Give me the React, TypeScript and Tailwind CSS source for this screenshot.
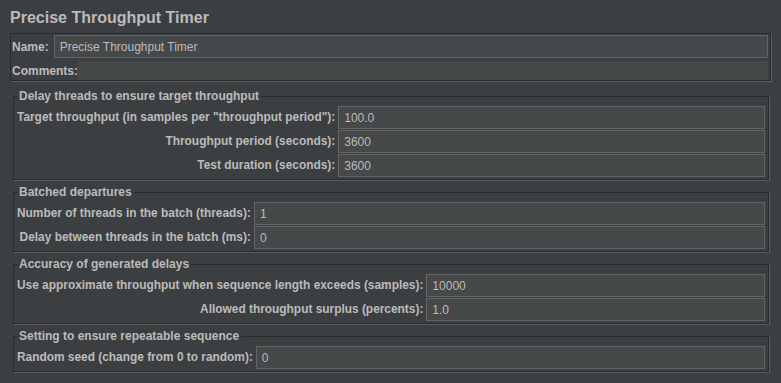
import React from "react";

type Row = { label: string; value: string };

const groups: { title: string; rows: Row[] }[] = [
  {
    title: "Delay threads to ensure target throughput",
    rows: [
      { label: 'Target throughput (in samples per "throughput period"):', value: "100.0" },
      { label: "Throughput period (seconds):", value: "3600" },
      { label: "Test duration (seconds):", value: "3600" },
    ],
  },
  {
    title: "Batched departures",
    rows: [
      { label: "Number of threads in the batch (threads):", value: "1" },
      { label: "Delay between threads in the batch (ms):", value: "0" },
    ],
  },
  {
    title: "Accuracy of generated delays",
    rows: [
      { label: "Use approximate throughput when sequence length exceeds (samples):", value: "10000" },
      { label: "Allowed throughput surplus (percents):", value: "1.0" },
    ],
  },
  {
    title: "Setting to ensure repeatable sequence",
    rows: [{ label: "Random seed (change from 0 to random):", value: "0" }],
  },
];

function Field({ value }: { value: string }) {
  return (
    <div className="h-[23px] flex items-center px-[5px] bg-[#45494a] border border-[#646464] text-[12px] text-[#bbbbbb]">
      {value}
    </div>
  );
}

function Group({ title, rows }: { title: string; rows: Row[] }) {
  return (
    <fieldset className="ml-[3px] mr-[2px] border border-[#2b2b2b] shadow-[1px_1px_0_#5b5e60] pl-[3px] pr-[3px] pt-[3px] pb-[2px]">
      <legend className="px-[2px] text-[12px] font-bold leading-[14px] text-[#bbbbbb]">{title}</legend>
      <div className="grid grid-cols-[auto_1fr] gap-x-[3px] gap-y-[1px]">
        {rows.map((r) => (
          <React.Fragment key={r.label}>
            <div className="flex items-center justify-end text-[11.9px] font-bold text-[#bbbbbb] whitespace-nowrap">
              {r.label}
            </div>
            <Field value={r.value} />
          </React.Fragment>
        ))}
      </div>
    </fieldset>
  );
}

export default function App() {
  return (
    <div
      className="w-[781px] h-[383px] overflow-hidden bg-[#3c3f41] px-[10px] pt-[8px]"
      style={{ fontFamily: '"Liberation Sans", Arial, sans-serif' }}
    >
      <h1 className="text-[16px] font-bold leading-[20px] text-[#bbbbbb]">Precise Throughput Timer</h1>

      {/* Name / comments */}
      <div className="mt-[5px] border border-[#2b2b2b] shadow-[1px_1px_0_#5b5e60] pl-[1px] pr-[2px] pt-[1px] pb-0">
        <div className="flex items-center gap-[5px]">
          <span className="text-[12px] font-bold text-[#bbbbbb]">Name:</span>
          <div className="flex-1">
            <Field value="Precise Throughput Timer" />
          </div>
        </div>
        <div className="mt-[3px] flex items-center">
          <span className="text-[12px] font-bold text-[#bbbbbb]">Comments:</span>
          <div className="flex-1 h-[19px] bg-[#45494a]"></div>
        </div>
      </div>

      <div className="mt-[8px] flex flex-col gap-[5px]">
        {groups.map((g) => (
          <Group key={g.title} title={g.title} rows={g.rows} />
        ))}
      </div>
    </div>
  );
}
